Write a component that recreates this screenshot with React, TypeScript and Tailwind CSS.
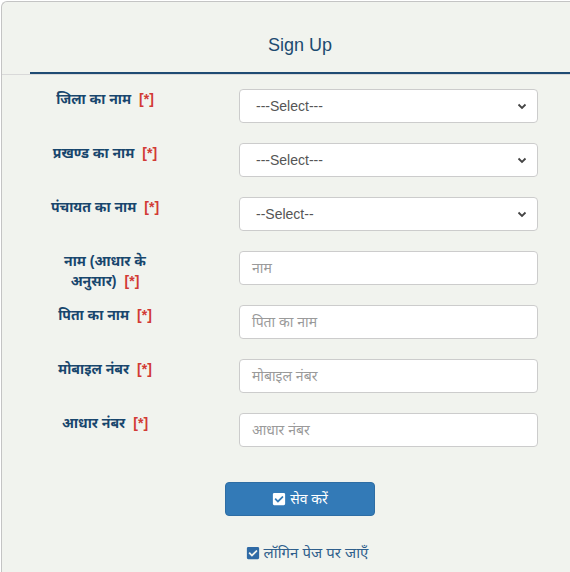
import { FaCheckSquare } from "react-icons/fa";

const font = { fontFamily: '"Liberation Sans", "Noto Sans", Arial, sans-serif' };

type Field = {
  label: React.ReactNode;
  kind: "select" | "input";
  text: string;
};

const fields: Field[] = [
  { label: "जिला का नाम", kind: "select", text: "---Select---" },
  { label: "प्रखण्ड का नाम", kind: "select", text: "---Select---" },
  { label: "पंचायत का नाम", kind: "select", text: "--Select--" },
  {
    label: (
      <>
        नाम (आधार के
        <br />
        अनुसार)
      </>
    ),
    kind: "input",
    text: "नाम",
  },
  { label: "पिता का नाम", kind: "input", text: "पिता का नाम" },
  { label: "मोबाइल नंबर", kind: "input", text: "मोबाइल नंबर" },
  { label: "आधार नंबर", kind: "input", text: "आधार नंबर" },
];

function Chevron() {
  return (
    <svg width="10" height="7" viewBox="0 0 10 7" className="shrink-0">
      <path d="M1.5 1.5 L5 5 L8.5 1.5" fill="none" stroke="#444" strokeWidth="1.8" />
    </svg>
  );
}

export default function App() {
  return (
    <div className="min-h-screen bg-white pt-px pl-px" style={font}>
      <div className="h-[571px] overflow-hidden rounded-tl-md border-t border-l border-[#c4c4c4] bg-[#f1f3ee]">
        {/* Header */}
        <div className="border-b border-[#d9d9d9]">
          <div className="flex h-[70px] items-center justify-center pl-[28px] pt-[16px] text-[18px] text-[#1c4a70]">
            Sign Up
          </div>
          <div className="ml-[28px] h-[2px] bg-[#1f4b73]" />
        </div>

        {/* Form */}
        <div className="flex flex-col gap-[20px] pt-[14px] pl-[28px]">
          {fields.map((f, i) => (
            <div key={i} className="flex h-[34px] items-start">
              <div className="w-[150px] text-center text-[14px] font-bold leading-[20px] text-[#18466d]">
                {f.label}
                <span className="ml-[8px] text-[#d23a35]">[*]</span>
              </div>
              <div className="ml-[59px] flex h-[34px] w-[299px] items-center justify-between rounded-[4px] border border-[#cccccc] bg-white pl-[16px] pr-[10px] text-[14px]">
                {f.kind === "select" ? (
                  <>
                    <span className="text-[#555]">{f.text}</span>
                    <Chevron />
                  </>
                ) : (
                  <span className="-ml-[4px] text-[#9a9a9a]">{f.text}</span>
                )}
              </div>
            </div>
          ))}
        </div>

        {/* Button */}
        <div className="mt-[35px] flex justify-center pl-[28px]">
          <button className="flex h-[34px] w-[150px] items-center justify-center gap-[4px] rounded-[4px] border border-[#2e6da4] bg-[#337ab7] text-[14px] text-white">
            <FaCheckSquare className="text-[14px]" />
            सेव करें
          </button>
        </div>

        <div className="mt-[26px] flex justify-center pl-[42px]">
          <a className="flex items-center gap-[4px] text-[15px] text-[#2f5f8c]">
            <FaCheckSquare className="text-[14px] text-[#2f6aa5]" />
            लॉगिन पेज पर जाएँ
          </a>
        </div>
      </div>
    </div>
  );
}
